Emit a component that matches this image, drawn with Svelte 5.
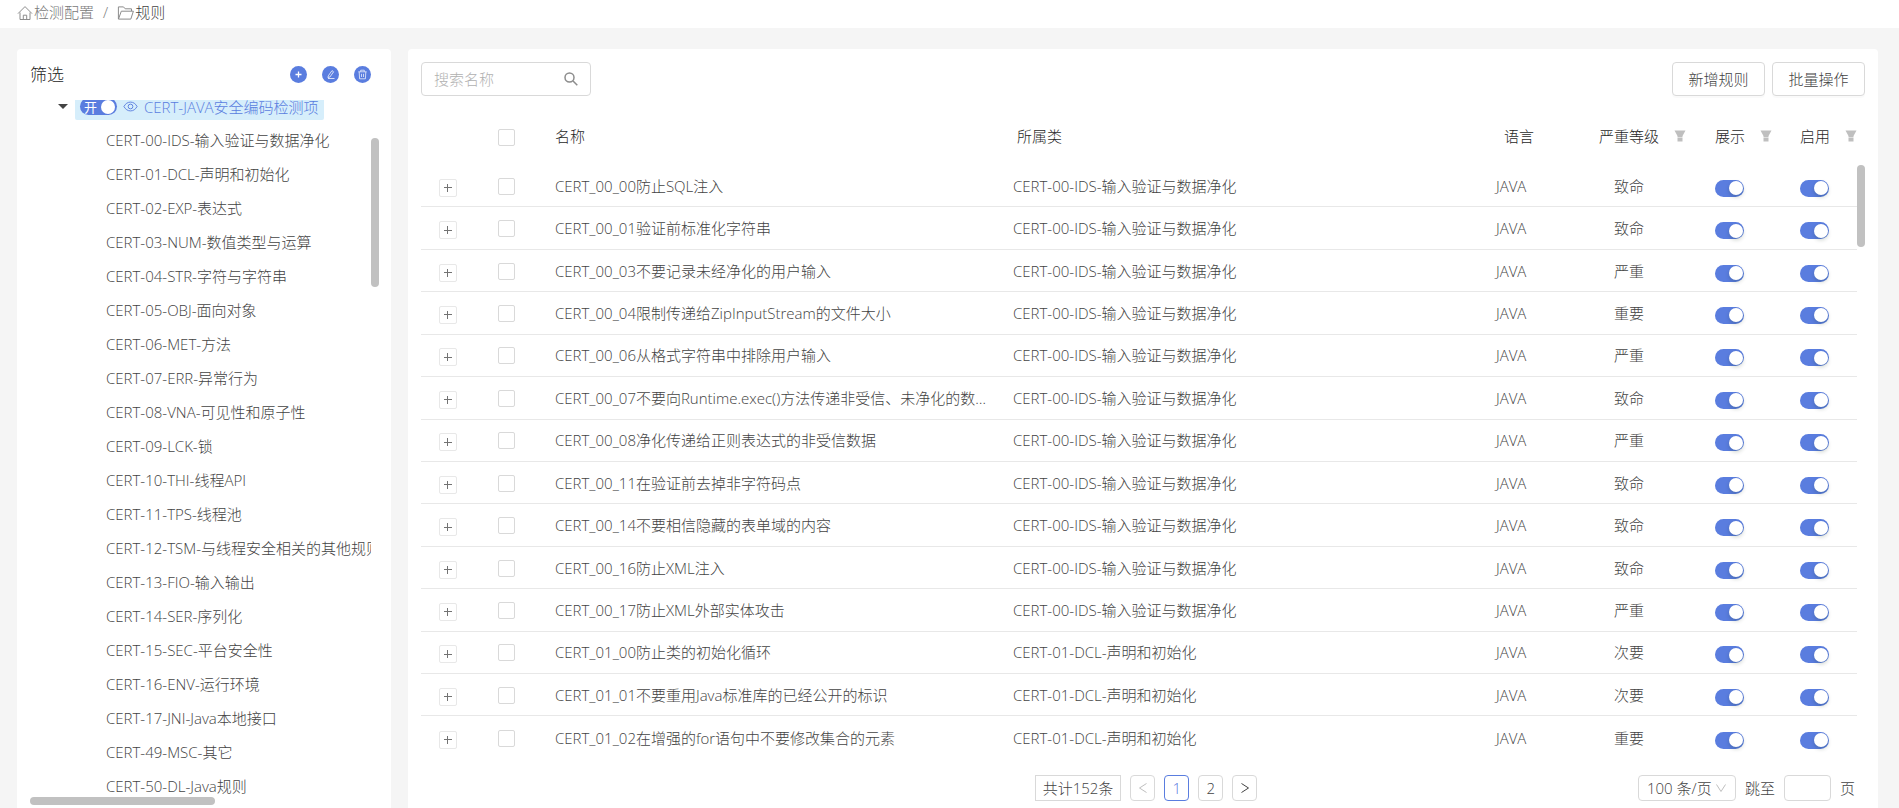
<script lang="ts">
  type Rule = { name: string; category: string; level: string; shown: boolean; enabled: boolean };

  const categories = [
    'CERT-00-IDS-输入验证与数据净化',
    'CERT-01-DCL-声明和初始化',
    'CERT-02-EXP-表达式',
    'CERT-03-NUM-数值类型与运算',
    'CERT-04-STR-字符与字符串',
    'CERT-05-OBJ-面向对象',
    'CERT-06-MET-方法',
    'CERT-07-ERR-异常行为',
    'CERT-08-VNA-可见性和原子性',
    'CERT-09-LCK-锁',
    'CERT-10-THI-线程API',
    'CERT-11-TPS-线程池',
    'CERT-12-TSM-与线程安全相关的其他规则',
    'CERT-13-FIO-输入输出',
    'CERT-14-SER-序列化',
    'CERT-15-SEC-平台安全性',
    'CERT-16-ENV-运行环境',
    'CERT-17-JNI-Java本地接口',
    'CERT-49-MSC-其它',
    'CERT-50-DL-Java规则',
  ];

  function rule(name: string, cat: number, level: string): Rule {
    return { name, category: categories[cat], level, shown: true, enabled: true };
  }

  let rules = $state<Rule[]>([
    rule('CERT_00_00防止SQL注入', 0, '致命'),
    rule('CERT_00_01验证前标准化字符串', 0, '致命'),
    rule('CERT_00_03不要记录未经净化的用户输入', 0, '严重'),
    rule('CERT_00_04限制传递给ZipInputStream的文件大小', 0, '重要'),
    rule('CERT_00_06从格式字符串中排除用户输入', 0, '严重'),
    rule('CERT_00_07不要向Runtime.exec()方法传递非受信、未净化的数据内容', 0, '致命'),
    rule('CERT_00_08净化传递给正则表达式的非受信数据', 0, '严重'),
    rule('CERT_00_11在验证前去掉非字符码点', 0, '致命'),
    rule('CERT_00_14不要相信隐藏的表单域的内容', 0, '致命'),
    rule('CERT_00_16防止XML注入', 0, '致命'),
    rule('CERT_00_17防止XML外部实体攻击', 0, '严重'),
    rule('CERT_01_00防止类的初始化循环', 1, '次要'),
    rule('CERT_01_01不要重用Java标准库的已经公开的标识', 1, '次要'),
    rule('CERT_01_02在增强的for语句中不要修改集合的元素', 1, '重要'),
  ]);

  let treeOn = $state(true);
  let search = $state('');
  let jump = $state('');
</script>

{#snippet filterIcon()}
  <button class="filter" aria-label="筛选">
    <svg viewBox="0 0 12 12" width="12" height="12"><path d="M.5.5h11L8.500 6v1h-5V6zM3.500 7.600h5v3.900h-5z" /></svg>
  </button>
{/snippet}

<div class="page">
  <nav class="breadcrumb">
    <a href="#config">
      <svg viewBox="0 0 16 16" width="16" height="16" class="line"><path d="M1 8.600 8 1.600l7 7M3 7.500v7h10v-7M6.300 14.500v-4.300h3.400v4.300" /></svg>
      检测配置
    </a>
    <span class="slash">/</span>
    <a href="#rules" class="current">
      <svg viewBox="0 0 17 16" width="17" height="16" class="line"><path d="M14.500 6V3.800H8.200L6.500 1.900H1.400v12.200h12.400L16.400 6.200H4.300L1.500 14" /></svg>
      规则
    </a>
  </nav>

  <main class="content">
    <aside class="card side">
      <header class="side-head">
        <h2>筛选</h2>
        <div class="actions">
          <button aria-label="新增"><svg viewBox="0 0 17 17" width="17" height="17"><path d="M8.500 5.500v6M5.500 8.500h6" stroke-width="1.300" /></svg></button>
          <button aria-label="编辑"><svg viewBox="0 0 17 17" width="17" height="17"><path d="M6.300 9.800 10 4.600l1.600 1.200-3.700 5.200-2 .6zM6 12.500h6.500" opacity=".75" /></svg></button>
          <button aria-label="删除"><svg viewBox="0 0 17 17" width="17" height="17"><path d="M4.300 5.800h8.400M6.700 5.600V4.200h3.600v1.400M5.200 6l.4 6.800h5.800l.4-6.800M7.500 7.800v3.200M9.500 7.800v3.200" opacity=".7" /></svg></button>
        </div>
      </header>

      <div class="tree">
        <ul>
          <li class="root">
            <button class="caret" aria-label="收起"></button>
            <div class="node">
              <label class="tree-switch">
                <span>开</span>
                <input type="checkbox" role="switch" bind:checked={treeOn} />
              </label>
              <svg viewBox="0 0 16 16" width="15" height="15" class="eye"><path d="M1 8c1.600-3 4-4.700 7-4.700S13.400 5 15 8c-1.600 3-4 4.700-7 4.700S2.600 11 1 8z" /><circle cx="8" cy="8" r="2.500" /></svg>
              <a href="#java">CERT-JAVA安全编码检测项</a>
            </div>
          </li>
          {#each categories as category}
            <li><a href="#category">{category}</a></li>
          {/each}
        </ul>
        <div class="bar tree-y"></div>
        <div class="bar tree-x"></div>
      </div>
    </aside>

    <section class="card main">
      <div class="toolbar">
        <div class="search">
          <input type="text" placeholder="搜索名称" aria-label="搜索名称" bind:value={search} />
          <svg viewBox="0 0 16 16" width="16" height="16"><circle cx="6.500" cy="6.500" r="4.500" /><path d="m10 10 4.300 4.300" /></svg>
        </div>
        <div class="tools">
          <button class="btn">新增规则</button>
          <button class="btn">批量操作</button>
        </div>
      </div>

      <div class="table-wrap">
        <table>
          <colgroup>
            <col class="c-expand" /><col class="c-check" /><col class="c-name" /><col />
            <col class="c-lang" /><col class="c-level" /><col class="c-show" /><col class="c-enable" />
          </colgroup>
          <thead>
            <tr>
              <th></th>
              <th class="mid"><input class="check" type="checkbox" aria-label="全选" /></th>
              <th>名称</th>
              <th class="h-category">所属类</th>
              <th class="h-lang">语言</th>
              <th><div class="head">严重等级{@render filterIcon()}</div></th>
              <th><div class="head">展示{@render filterIcon()}</div></th>
              <th><div class="head">启用{@render filterIcon()}</div></th>
            </tr>
          </thead>
          <tbody>
            {#each rules as r}
              <tr>
                <td class="mid"><button class="expand" aria-label="展开"></button></td>
                <td class="mid"><input class="check" type="checkbox" aria-label={r.name} /></td>
                <td class="name">{r.name}</td>
                <td>{r.category}</td>
                <td>JAVA</td>
                <td class="level">{r.level}</td>
                <td><input class="switch" type="checkbox" role="switch" aria-label="展示" bind:checked={r.shown} /></td>
                <td><input class="switch" type="checkbox" role="switch" aria-label="启用" bind:checked={r.enabled} /></td>
              </tr>
            {/each}
          </tbody>
        </table>
        <div class="bar table-y"></div>
      </div>

      <footer class="pager">
        <div class="pages">
          <span class="total">共计152条</span>
          <button disabled aria-label="上一页"><svg viewBox="0 0 12 12" width="12" height="12"><path d="M9.500 1.500 2.500 6l7 4.500" /></svg></button>
          <button class="active">1</button>
          <button>2</button>
          <button aria-label="下一页"><svg viewBox="0 0 12 12" width="12" height="12"><path d="M2.500 1.500 9.500 6l-7 4.500" /></svg></button>
        </div>
        <div class="options">
          <div class="size">
            <select aria-label="每页条数">
              <option>100 条/页</option>
            </select>
            <svg viewBox="0 0 12 12" width="12" height="12"><path d="m1.500 2.500 4.500 7 4.500-7" /></svg>
          </div>
          <label>跳至 <input type="text" bind:value={jump} /> 页</label>
        </div>
      </footer>
    </section>
  </main>
</div>

<style>
  :global(body) {
    background: #f5f5f5;
  }

  .page {
    --blue: #5a7ddf;
    --line: #d9d9d9;
    --text: #434343;
    display: flex;
    flex-direction: column;
    height: 100vh;
    overflow: hidden;
    font: 300 15px/24px "Open Sans", "Noto Sans CJK SC", sans-serif;
    color: var(--text);
  }

  .page * { box-sizing: border-box; }

  button, input, select {
    margin: 0;
    font: inherit;
    color: inherit;
  }

  button {
    padding: 0;
    border: 0;
    background: none;
    cursor: pointer;
  }

  a {
    color: inherit;
    text-decoration: none;
  }

  svg {
    display: block;
    flex: none;
    fill: none;
    stroke: currentColor;
  }

  .breadcrumb {
    flex: none;
    display: flex;
    align-items: center;
    gap: 9px;
    height: 28px;
    padding: 0 17px 4px;
    background: #fff;
    color: #7a7a7a;
  }

  .breadcrumb a {
    display: flex;
    align-items: center;
    gap: 1px;
  }

  .breadcrumb .current { color: var(--text); }
  .breadcrumb .line { color: #8c8c8c; margin-top: 2px; }

  .content {
    flex: 1;
    min-height: 0;
    display: flex;
    gap: 17px;
    padding: 21px 21px 0 17px;
  }

  .card {
    display: flex;
    flex-direction: column;
    min-height: 0;
    background: #fff;
    border-radius: 4px 4px 0 0;
  }

  .side {
    flex: 0 0 374px;
    min-width: 0;
    padding: 0 12px 0 13px;
  }

  .side-head {
    flex: none;
    display: flex;
    align-items: center;
    justify-content: space-between;
    height: 51px;
    padding-right: 8px;
  }

  h2 {
    margin: 0;
    font-size: 17px;
    font-weight: 300;
    color: #1f1f1f;
  }

  .actions {
    display: flex;
    gap: 15px;
  }

  .actions button {
    border-radius: 50%;
    background: var(--blue);
    color: #fff;
  }

  .tree {
    position: relative;
    flex: 1;
    min-height: 0;
    overflow: hidden;
  }

  ul {
    margin: -10px 8px 0 0;
    padding: 0;
    list-style: none;
    overflow: hidden;
  }

  li {
    display: flex;
    align-items: center;
    height: 34px;
    padding-left: 76px;
    white-space: nowrap;
  }

  .root {
    gap: 7px;
    height: 33px;
    padding-left: 28px;
    line-height: 12px;
  }

  .caret {
    width: 10px;
    border: 5px solid transparent;
    border-top-color: #434343;
    border-bottom: 0;
  }

  .node {
    display: flex;
    align-items: center;
    gap: 6px;
    height: 27px;
    padding: 0 5px;
    border-radius: 2px;
    background: #d6eefb;
    color: var(--blue);
  }

  .tree-switch {
    display: flex;
    align-items: center;
    justify-content: space-between;
    width: 37px;
    height: 17px;
    padding: 0 2px 0 4px;
    border-radius: 9px;
    background: var(--blue);
    color: #fff;
    font-size: 13px;
    font-weight: 400;
  }

  .tree-switch input {
    flex: none;
    appearance: none;
    width: 14px;
    height: 14px;
    border-radius: 50%;
    background: #fff;
  }

  .bar {
    position: absolute;
    border-radius: 4px;
    background: #c1c1c1;
  }

  .tree-y {
    top: 38px;
    right: 0;
    width: 8px;
    height: 149px;
  }

  .tree-x {
    left: 0;
    bottom: 3px;
    width: 185px;
    height: 8px;
  }

  .main {
    flex: 1;
    min-width: 0;
    padding: 13px 13px 7px;
  }

  .toolbar {
    flex: none;
    display: flex;
    justify-content: space-between;
    margin-bottom: 13px;
  }

  .search { position: relative; }

  .search input {
    display: block;
    width: 170px;
    height: 34px;
    padding: 0 32px 0 12px;
    border: 1px solid var(--line);
    border-radius: 4px;
    outline: 0;
  }

  .search input::placeholder { color: #b0b0b0; }

  .search svg {
    position: absolute;
    top: 9px;
    right: 12px;
    color: #8c8c8c;
    stroke-width: 1.5;
  }

  .tools {
    display: flex;
    gap: 7px;
  }

  .btn {
    width: 93px;
    height: 34px;
    border: 1px solid var(--line);
    border-radius: 4px;
    background: #fff;
    box-shadow: 0 2px 0 rgba(0, 0, 0, 0.02);
  }

  .table-wrap {
    position: relative;
    flex: 1;
    min-height: 0;
    padding-right: 8px;
  }

  table {
    width: 100%;
    height: 100%;
    table-layout: fixed;
    border-collapse: separate;
    border-spacing: 0;
  }

  .c-expand { width: 53px; }
  .c-check { width: 65px; }
  .c-name { width: 458px; }
  .c-lang { width: 103px; }
  .c-level { width: 116px; }
  .c-show { width: 85px; }
  .c-enable { width: 73px; }

  th, td {
    padding: 0 16px;
    text-align: left;
    font-weight: 300;
    white-space: nowrap;
  }

  th {
    height: 56px;
    padding-right: 0;
    padding-bottom: 2px;
    color: #1f1f1f;
  }

  td {
    height: 42px;
    border-bottom: 1px solid #e8e8e8;
  }

  tr:last-child td { border-bottom: 0; }

  td.name {
    padding-right: 8px;
    overflow: hidden;
    text-overflow: ellipsis;
  }

  th.h-category { padding-left: 20px; }
  th.h-lang { padding-left: 24px; }
  td.level { padding-left: 31px; }

  .mid {
    padding: 1px 0 0;
    text-align: center;
  }

  .head {
    display: flex;
    align-items: center;
    gap: 15px;
  }

  .filter { color: #bfbfbf; }

  .filter svg {
    fill: currentColor;
    stroke: none;
  }

  .check {
    display: block;
    appearance: none;
    width: 17px;
    height: 17px;
    margin: 0 auto;
    border: 1px solid var(--line);
    border-radius: 2px;
    background: #fff;
  }

  .expand {
    display: block;
    width: 18px;
    height: 18px;
    margin: 3px auto 0;
    border: 1px solid #e8e8e8;
    border-radius: 2px;
    background:
      linear-gradient(#737373, #737373) center / 8px 1px no-repeat,
      linear-gradient(#737373, #737373) center / 1px 8px no-repeat;
  }

  .switch {
    display: flex;
    align-items: center;
    justify-content: flex-end;
    appearance: none;
    width: 29px;
    height: 17px;
    margin-top: 5px;
    padding: 0 1px;
    border-radius: 9px;
    background: #bfbfbf;
  }

  .switch:checked { background: var(--blue); }

  .switch::before {
    content: "";
    width: 14px;
    height: 14px;
    border-radius: 50%;
    background: #fff;
    box-shadow: 0 2px 4px rgba(0, 35, 11, 0.2);
  }

  .switch:not(:checked) { justify-content: flex-start; }

  .table-y {
    top: 56px;
    right: 0;
    width: 8px;
    height: 82px;
  }

  .pager {
    flex: none;
    display: grid;
    grid-template-columns: 1fr auto 1fr;
    margin-top: 16px;
    padding: 0 10px 0 16px;
    line-height: 24px;
  }

  .pages {
    grid-column: 2;
    display: flex;
    gap: 9px;
  }

  .total {
    padding: 0 7px;
    border: 1px solid var(--line);
  }

  .pages button {
    display: grid;
    place-items: center;
    width: 25px;
    height: 26px;
    border: 1px solid var(--line);
    border-radius: 4px;
  }

  .pages button:disabled { color: #bfbfbf; }

  .pages .active {
    border-color: var(--blue);
    color: var(--blue);
  }

  .options {
    display: flex;
    justify-content: flex-end;
    gap: 9px;
  }

  .options label {
    display: flex;
    align-items: center;
    gap: 9px;
  }

  .options input {
    width: 47px;
    height: 26px;
    border: 1px solid var(--line);
    border-radius: 4px;
  }

  .size { position: relative; }

  select {
    display: block;
    appearance: none;
    width: 98px;
    height: 26px;
    padding: 0 8px;
    border: 1px solid var(--line);
    border-radius: 4px;
    background: #fff;
  }

  .size svg {
    position: absolute;
    top: 7px;
    right: 9px;
    color: #bfbfbf;
    pointer-events: none;
  }
</style>
